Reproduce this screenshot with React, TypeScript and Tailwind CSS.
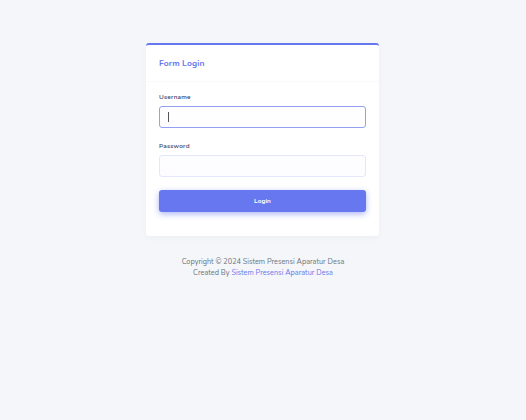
export default function App() {
  return (
    <div
      className="min-h-screen w-full bg-[#f4f6f9] flex flex-col items-center pt-[43px]"
      style={{ fontFamily: '"Nunito", "Open Sans", "Liberation Sans", sans-serif' }}
    >
      <div className="w-[233px] mr-[1px] bg-white rounded-[3px] border-t-2 border-[#6777ef] shadow-[0_2px_6px_rgba(0,0,0,0.03)]">
        <div className="h-[37px] flex items-center px-[13px] border-b border-[#f9f9f9]">
          <h4 className="text-[8.5px] font-bold text-[#6777ef] tracking-[0.1px]">Form Login</h4>
        </div>
        <form className="px-[13px] pt-[10px] pb-[24px] flex flex-col">
          <label className="text-[6.5px] font-semibold text-[#34395e] mb-[4px] tracking-[0.2px]">Username</label>
          <div className="h-[22px] rounded-[3px] border border-[#95a0f4] bg-[#fefeff] flex items-center px-[8px]">
            <span className="w-px h-[10px] bg-[#555]" />
          </div>
          <label className="text-[6.5px] font-semibold text-[#34395e] mt-[13px] mb-[4px] tracking-[0.2px]">Password</label>
          <div className="h-[22px] rounded-[3px] border border-[#e4e6fc] bg-[#fdfdff]" />
          <button
            type="button"
            className="mt-[13px] h-[22px] rounded-[3px] bg-[#6777ef] text-white text-[6.5px] font-bold shadow-[0_2px_6px_#acb5f6]"
          >
            Login
          </button>
        </form>
      </div>
      <div className="mt-[21px] text-center text-[7.3px] leading-[11px] text-[#6c757d]">
        <div>Copyright © 2024 Sistem Presensi Aparatur Desa</div>
        <div>
          Created By <span className="text-[#6777ef]">Sistem Presensi Aparatur Desa</span>
        </div>
      </div>
    </div>
  );
}
